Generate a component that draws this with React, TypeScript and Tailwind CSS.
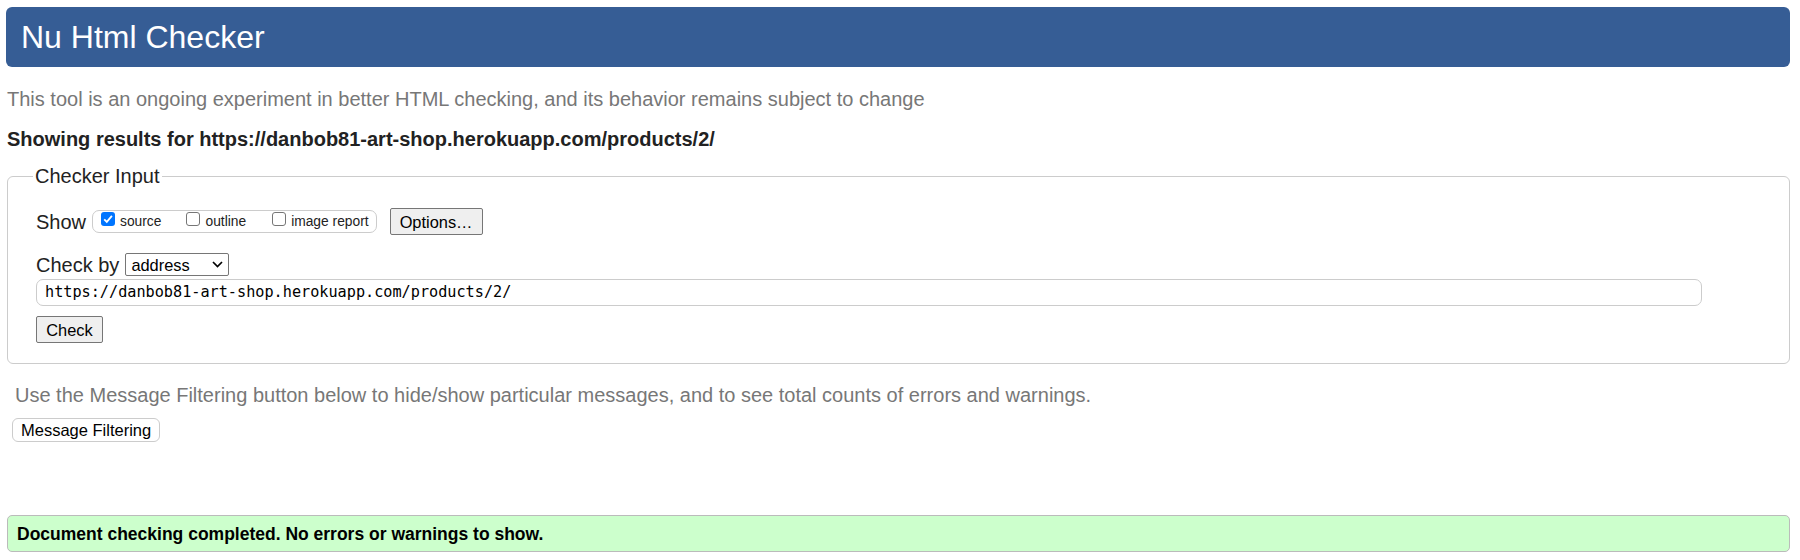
import React from "react";

const sans = { fontFamily: '"Liberation Sans", Arial, sans-serif' };

function Box({ checked }: { checked?: boolean }) {
  if (checked) {
    return (
      <span className="mb-[6px] flex h-[14px] w-[14px] items-center justify-center rounded-[3px] bg-[#0075ff]">
        <svg width="12" height="12" viewBox="0 0 12 12">
          <path d="M2.2 6.3 L4.8 8.9 L9.9 2.9" fill="none" stroke="#fff" strokeWidth="1.8" />
        </svg>
      </span>
    );
  }
  return <span className="mb-[6px] block h-[14px] w-[14px] rounded-[3px] border border-[#767676] bg-white" />;
}

export default function App() {
  return (
    <div className="min-h-[560px] bg-white pl-[6px] pr-[10px] pt-[7px] text-[#222]" style={sans}>
      <h1 className="h-[60px] rounded-[6px] bg-[#365d95] pl-[15px] text-[32px] font-normal leading-[60px] text-white">
        Nu Html Checker
      </h1>
      <p className="mt-[21px] pl-[1px] text-[20px] leading-[22px] text-[#777]">
        This tool is an ongoing experiment in better HTML checking, and its behavior remains subject to change
      </p>
      <p className="mt-[18px] pl-[1px] text-[20px] font-bold leading-[22px] text-[#222]">
        Showing results for https://danbob81-art-shop.herokuapp.com/products/2/
      </p>
      <fieldset className="ml-[1px] mt-[14px] rounded-[6px] border border-[#cccccc] pb-[20px] pl-[28px] pr-[20px] pt-[20px]">
        <legend className="-ml-[3px] px-[2px] text-[20px] leading-[24px] text-[#222]">Checker Input</legend>
        <div className="flex h-[27px] items-center">
          <span className="text-[20px] leading-[22px]">Show</span>
          <div className="ml-[6px] flex h-[23px] items-center rounded-[7px] border border-[#cccccc] pl-[8px] pr-[7px] text-[13.8px] leading-[16px] text-[#222]">
            <Box checked />
            <span className="ml-[5px]">source</span>
            <span className="ml-[25px]" />
            <Box />
            <span className="ml-[5px]">outline</span>
            <span className="ml-[26px]" />
            <Box />
            <span className="ml-[5px]">image report</span>
          </div>
          <button className="ml-[13px] h-[27px] w-[93px] rounded-[2px] border border-[#767676] bg-[#efefef] text-[16.4px] leading-[20px] text-black">
            Options…
          </button>
        </div>
        <div className="mt-[18px] flex h-[23px] items-center">
          <span className="text-[20px] leading-[22px]">Check by</span>
          <div className="ml-[6px] flex h-[23px] w-[104px] items-center justify-between rounded-[2px] border border-[#767676] bg-white pl-[5px] pr-[5px] text-[16.4px] leading-[20px] text-black">
            <span>address</span>
            <svg width="11" height="7" viewBox="0 0 11 7">
              <path d="M1 1 L5.5 5.5 L10 1" fill="none" stroke="#000" strokeWidth="1.7" />
            </svg>
          </div>
        </div>
        <div
          className="mt-[3px] flex h-[27px] w-[1666px] items-center rounded-[7px] border border-[#cccccc] bg-white px-[8px] text-[15.2px] text-black"
          style={{ fontFamily: '"DejaVu Sans Mono", "Liberation Mono", monospace' }}
        >
          https://danbob81-art-shop.herokuapp.com/products/2/
        </div>
        <button className="mt-[10px] block h-[27px] w-[67px] rounded-[2px] border border-[#767676] bg-[#efefef] text-[16.4px] leading-[20px] text-black">
          Check
        </button>
      </fieldset>
      <p className="mt-[20px] pl-[9px] text-[20px] leading-[22px] text-[#777]">
        Use the Message Filtering button below to hide/show particular messages, and to see total counts of errors and warnings.
      </p>
      <button className="ml-[6px] mt-[12px] block h-[24px] rounded-[6px] border border-[#cccccc] bg-white px-[8px] text-[16.5px] leading-[20px] text-black">
        Message Filtering
      </button>
      <div className="ml-[1px] mt-[73px] flex h-[37px] items-center rounded-[5px] border border-[#bbbbbb] bg-[#ccffcc] pl-[9px] text-[17.5px] font-bold leading-[20px] text-black">
        Document checking completed. No errors or warnings to show.
      </div>
    </div>
  );
}
